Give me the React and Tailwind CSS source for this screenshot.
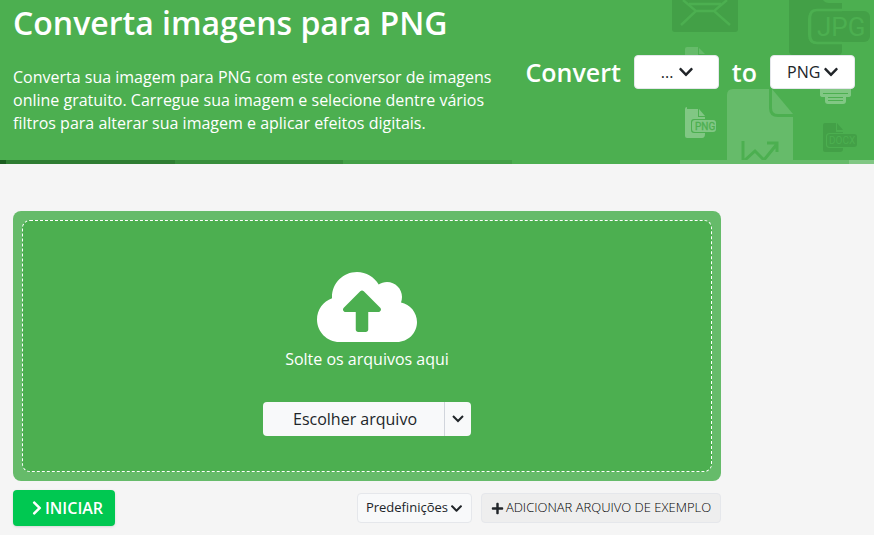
import { FaChevronDown, FaChevronRight, FaCloudUploadAlt, FaPlus } from "react-icons/fa";

function HeaderArt() {
  return (
    <svg
      className="pointer-events-none absolute top-0 right-0 h-[160px] w-[210px]"
      viewBox="0 0 210 160"
      fontFamily="Roboto, sans-serif"
      aria-hidden="true"
    >
      <g fill="#43a047">
        <path d="M8 0H74V29a3 3 0 0 1-3 3H11a3 3 0 0 1-3-3Z" />
        <path d="M125 0h34q2 3 6 3h13v7h-25q-9 0-9 9v16q0 9 9 9h25v7q0 4-4 4H129q-4 0-4-4Z" />
        <rect x="147" y="11" width="59" height="31" rx="6" />
      </g>
      <path
        fill="none"
        stroke="#4caf50"
        strokeWidth="2.4"
        d="M17 25 32 11 19 0M66 25 50 11 63 0M25 4H57M31 11H51"
      />
      <path fill="none" stroke="#4caf50" strokeWidth="2.6" d="M178 10H153q-7 0-7 7v19q0 7 7 7h25" />
      <text x="153" y="36" fontSize="26" fill="#4caf50">JPG</text>

      <path fill="#66bb6a" d="M21 49q0-2 2-2h11v8h7v10H21Z" />
      <path fill="#66bb6a" d="m35 48 6 6h-6Z" />

      <path fill="#81c784" d="M23 109h11v8h7v2H30q-3 0-3 3v8q0 3 3 3h11v1q0 4-3 4H23q-2 0-2-2v-27q0-2 2-2Z" />
      <path fill="#81c784" d="m35 109 6 7h-6Z" />
      <rect fill="#81c784" x="28" y="120" width="24" height="12" rx="3" />
      <text x="31" y="130" fontSize="10" fill="#4caf50" stroke="#4caf50" strokeWidth="0.3">PNG</text>

      <path fill="#66bb6a" d="M69 89h36v19q0 9 9 9h15v43H63V95q0-6 6-6Z" />
      <path fill="#66bb6a" d="m108 89 21 25h-15q-6 0-6-6Z" />
      <path fill="none" stroke="#4caf50" strokeWidth="3" d="M79 141v19M81 160l10-9 9 9 13-16M103 143h10v9" />

      <path fill="#81c784" d="M156 87h31v8q0 2-3 2h-3v-4h-19v4h-3q-3 0-3-2Z" />
      <path fill="#81c784" d="M161 94h21v7q0 3-3 3h-15q-3 0-3-3Z" />
      <path fill="none" stroke="#4caf50" strokeWidth="1" d="M159 93.500h25M164 97.500h15M164 100.500h15" />

      <g fill="#43a047">
        <path d="M161 123h11v9h7v1h-13q-4 0-4 3v9q0 3 4 3h13v1q0 3-3 3h-15q-2 0-2-2v-25q0-2 2-2Z" />
        <path d="m173 123 6 7h-6Z" />
        <rect x="163" y="134" width="30" height="13" rx="3" />
      </g>
      <text x="165" y="144" fontSize="10" fill="#4caf50">DOCX</text>
    </svg>
  );
}

function FormatSelect({ label, value, selectClass, iconClass }) {
  return (
    <span className="relative inline-flex">
      <select
        aria-label={label}
        defaultValue={value}
        className={`h-[34px] w-[85px] appearance-none rounded border border-gray-200 bg-white text-base leading-6 font-normal text-[#212529] ${selectClass}`}
      >
        <option>{value}</option>
      </select>
      <FaChevronDown className={`pointer-events-none absolute top-[9px] size-4 text-[#212529] ${iconClass}`} />
    </span>
  );
}

const stripes = ["bg-[#2e7d32]", "bg-[#388e3c]", "bg-[#43a047]", "bg-[#4caf50]", "bg-[#66bb6a]"];

export default function App() {
  return (
    <div className="min-h-screen bg-[#f5f5f5] font-['Open_Sans','Noto_Sans',sans-serif] text-[#212529]">
      <header className="relative bg-[#4caf50] text-white">
        <HeaderArt />
        <div className="relative flex h-[160px] items-start justify-between pr-[19px] pl-[13px]">
          <div className="w-[480px]">
            <h1 className="text-[32px] leading-[46px] font-semibold">Converta imagens para PNG</h1>
            <p className="mt-5 text-base leading-[23px]">
              Converta sua imagem para PNG com este conversor de imagens online gratuito. Carregue sua imagem e
              selecione dentre vários filtros para alterar sua imagem e aplicar efeitos digitais.
            </p>
          </div>
          <div className="flex items-center gap-[13px] pt-[54px] text-[25px] leading-9 font-semibold">
            <span>Convert</span>
            <FormatSelect label="Converter de" value="..." selectClass="pl-[26px]" iconClass="right-[25px]" />
            <span>to</span>
            <FormatSelect label="Converter para" value="PNG" selectClass="pl-4" iconClass="right-4" />
          </div>
        </div>
        <div className="flex h-1">
          <span className="flex-[60] bg-[#1b5e20]" />
          {stripes.map((color) => (
            <span key={color} className={`flex-[1686] ${color}`} />
          ))}
          <span className="flex-[250] bg-[#81c784]" />
        </div>
      </header>

      <main className="mr-[153px] ml-[13px] pt-[47px]">
        <section className="rounded-lg bg-[#66bb6a] p-[9px]">
          <div className="flex h-[252px] flex-col items-center rounded-lg border border-dashed border-white bg-[#4caf50] pt-[46px] text-white">
            <FaCloudUploadAlt className="h-20 w-[100px]" />
            <p className="text-base leading-6">Solte os arquivos aqui</p>
            <div className="mt-[31px] flex h-[34px] overflow-hidden rounded bg-[#f8f9fa] text-[#212529]">
              <button type="button" className="w-[181px] pl-[3px] text-center text-base font-medium">
                Escolher arquivo
              </button>
              <button
                type="button"
                aria-label="Mais opções"
                className="flex w-[27px] items-center justify-center border-l border-gray-300"
              >
                <svg className="h-3 w-3" viewBox="0 0 12 12" fill="none" stroke="currentColor" strokeWidth="2" aria-hidden="true">
                  <path d="m1 3 5 5 5-5" />
                </svg>
              </button>
            </div>
          </div>
        </section>

        <div className="flex items-center gap-[9px] pt-[9px]">
          <button
            type="button"
            className="mr-auto flex h-9 w-[102px] items-center justify-center rounded-sm bg-[#00c851] pl-1 text-base font-semibold text-white shadow-sm"
          >
            <FaChevronRight className="size-4" />
            INICIAR
          </button>
          <button
            type="button"
            className="flex h-[30px] w-[115px] items-center justify-center gap-[2px] rounded border border-gray-200 bg-[#f8f9fa] text-[13px]"
          >
            Predefinições
            <FaChevronDown className="size-[13px]" />
          </button>
          <button
            type="button"
            className="flex h-[30px] w-[240px] items-center justify-center gap-[2px] rounded border border-gray-200 bg-[#eeeeee] text-[13px] font-light whitespace-nowrap text-black"
          >
            <FaPlus className="size-[13px] text-[#212529]" />
            ADICIONAR ARQUIVO DE EXEMPLO
          </button>
        </div>
      </main>
    </div>
  );
}
